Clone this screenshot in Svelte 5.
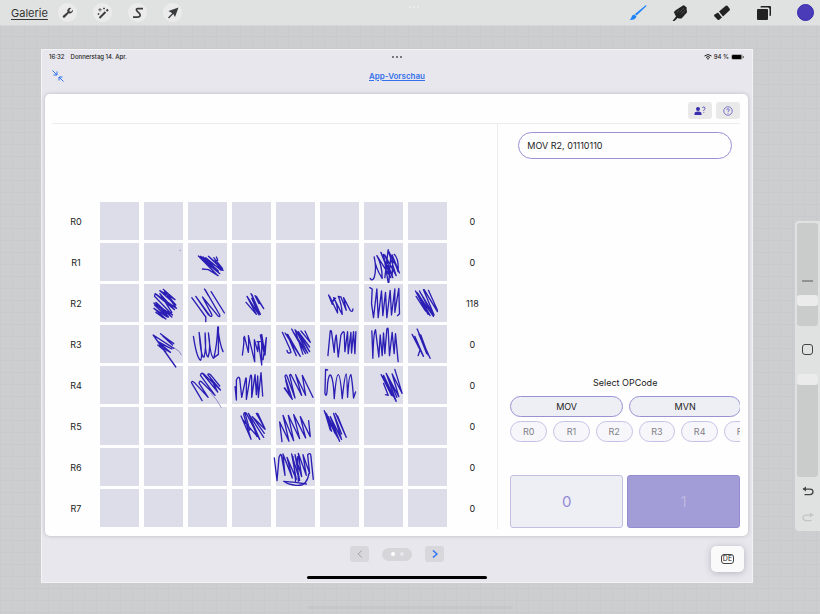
<script lang="ts">
  const bits = [0, 1, 2, 3, 4, 5, 6, 7];
  const rows = [
    { name: "R0", value: 0 },
    { name: "R1", value: 0 },
    { name: "R2", value: 118 },
    { name: "R3", value: 0 },
    { name: "R4", value: 0 },
    { name: "R5", value: 0 },
    { name: "R6", value: 0 },
    { name: "R7", value: 0 }
  ];
  const registers = ["R0", "R1", "R2", "R3", "R4", "R5"];

  let instruction = $state("MOV R2, 01110110");
  let brushSize = $state(22);
  let opacity = $state(100);

  // pen strokes over the bit grid, three units per pixel
  const strokes = [
    {
      x: 264, y: 108,
      paths: [
        "M176 63L232 120L186 72L240 116L182 64L250 106L206 64L248 100L222 68M188 102L206 104L235 122M230 66L234 76L226 78M190 66L236 108M198 68L244 106",
        "M70 163L106 194L60 167L108 210L74 170L110 220L46 176L104 224L60 176L96 232M46 176L44 184L98 240L42 204L96 246L48 202L86 246L44 210L82 246L42 220L78 252L48 232L70 248",
        "M194 162L206 182M196 164L240 240Q242 248 234 242L188 186L216 238Q218 248 210 242L168 184L206 240M156 188L198 246L198 260M214 170L254 234",
        "M334 176L346 202M319 202L350 238L322 184L358 240L336 190L362 238L336 178M350 184L372 221L352 190M346 182L358 206",
        "M62 296L102 326L68 302L98 330M102 340L40 300L108 396M52 318L96 342L58 324L92 352L54 330L78 350",
        "M161 304Q170 366 182 376Q190 370 178 292Q184 372 193 366Q200 340 196 294Q196 362 205 366Q214 340 206 294Q212 366 222 370Q232 330 234 276Q240 330 250 350M236 276L236 358L222 368",
        "M308 360Q314 320 312 308M314 304L326 352Q328 320 326 302L345 380L344 314L354 350L356 320L366 390L366 298L376 360L380 308L370 374M362 300L372 350M352 320L362 320"
      ]
    },
    {
      x: 684, y: 108,
      paths: [
        "M272 130Q278 140 284 128Q292 100 284 66Q288 100 308 130Q308 90 292 62L334 128L304 52L340 128L316 60L350 122L326 46L360 114L338 60L356 110Q358 70 344 58M326 44L316 128M334 60L328 142M312 58L326 142M340 70L338 122",
        "M147 180L158 208Q162 186 168 190M150 184L174 234Q174 206 162 188L188 238Q186 206 176 184L184 186L200 226L192 188L212 226Q219 234 220 222",
        "M271 158L278 162L276 206L282 248L292 162L296 248L306 168L310 242L318 172L322 248L332 166L336 240L346 162L346 232L358 160L360 236L354 242",
        "M408 168L446 238L416 176L452 242L412 172L462 244L420 168L464 240L432 164M474 230L434 164M447 166L474 226M410 184L438 228",
        "M8 292L32 344M16 294L62 364L24 298L50 362L22 298M36 282L78 356L40 290L84 354L50 288L90 350L56 290L90 336M64 288L92 322L76 288M22 346Q24 358 34 352L30 340M46 284L70 358",
        "M145 362L152 288Q155 284 156 292L164 352Q166 310 170 300L176 366L184 300Q192 284 194 294L196 350L204 290L206 356L214 292L216 354L222 290L226 356L229 290",
        "M277 288L280 370Q282 290 288 284L298 366L302 300L308 362L312 294L316 356L322 282Q326 276 326 284L330 362L338 292L344 356L348 296L356 380",
        "M398 298L432 364L406 304L426 350M413 282L452 370L418 296L442 356M424 300L446 360M416 362L422 344"
      ]
    },
    {
      x: 264, y: 483,
      paths: [
        "M187 122L155 68Q156 60 164 68L205 112L178 70Q178 60 186 66L226 106L182 46Q184 36 192 42L242 90L204 44Q206 38 214 46L240 78M188 40L234 96L210 50",
        "M286 80L290 120L290 60Q296 46 300 56L306 112L318 56Q320 50 320 62L320 118L332 48Q336 40 336 60L336 112L346 44L350 104L354 48L356 112L364 38L369 108",
        "M434 84L458 118L436 50Q438 40 442 48L466 114L450 46Q452 40 456 48L486 106L468 44L498 106L488 46L520 112M436 84L450 108L438 60",
        "M304 168L334 238L312 164Q314 154 320 160L360 238L326 160L372 232M350 160L376 206L354 160M310 180L350 226M376 208L338 170L374 220M316 160L330 210M332 172L352 230",
        "M427 245L420 186L448 244L430 166L462 242L446 166L480 236L462 164L498 234L482 170L512 230L507 182",
        "M404 294L412 362L418 292Q424 276 426 290L436 346L430 282L458 354L442 292L470 358L456 282L480 362L466 284L486 350L476 280L500 346L490 284L510 340L504 284Q514 276 514 290L521 358M460 290L468 364M474 290L476 364M508 340Q502 380 470 376Q444 374 432 364Q470 366 500 372"
      ]
    },
    {
      x: 774, y: 483,
      paths: [
        "M54 30L48 28L46 100Q52 120 54 70Q58 40 64 46Q72 60 74 116Q80 44 86 44Q92 44 98 116Q106 42 110 42Q112 42 114 112Q118 44 124 44Q128 60 132 114L138 96",
        "M215 44L246 106L222 46L260 124L230 40L268 110L248 42L278 100L256 28M228 104L236 106L222 70M220 50L250 108M236 50L262 112",
        "M44 152L66 214L50 160L76 220L56 170L90 244L62 170L96 238L72 160L96 222M78 160L110 232L84 168M46 156L62 210M52 172L84 232M60 182L80 226"
      ]
    }
  ];
</script>

<header class="toolbar">
  <a class="gallery" href="#gallery">Galerie</a>
  <button class="round" aria-label="Actions">
    <svg width="12" height="12" viewBox="0 0 24 24"><path fill="#3c3d3e" d="M22 6.500a6.200 6.200 0 0 1-8.600 5.800L5.500 20.800a2.300 2.300 0 0 1-3.400-3.200l8.800-7.500A6.200 6.200 0 0 1 18.500 2l-3.800 3.900.6 2.900 2.900.5L21.800 5.500z" /></svg>
  </button>
  <button class="round" aria-label="Adjustments">
    <svg width="12" height="12" viewBox="0 0 24 24" stroke="#3c3d3e" fill="none"><path stroke-width="4" d="M5 22L17 10M19 8L22 5" /><path stroke-width="1.500" d="M6 2v7M2.500 5.500h7M14 1v4M12 3h4M3 12v4M1 14h4" /></svg>
  </button>
  <button class="round" aria-label="Selection">
    <svg width="12" height="12" viewBox="0 0 24 24" fill="none" stroke="#3c3d3e" stroke-width="3.500"><path d="M22 3H12Q7 3 10 8l5 5q4 7-4 7H2" /></svg>
  </button>
  <button class="round" aria-label="Transform">
    <svg width="12" height="12" viewBox="0 0 24 24" fill="#3c3d3e"><path d="M23 1L16 20l-3.500-6L4 23l-2-2 8.500-8.500L3 8z" /></svg>
  </button>
  <span class="dots faint"><i></i><i></i><i></i></span>
  <div class="tools">
    <button aria-label="Paint">
      <svg width="18" height="18" viewBox="0 0 36 36" fill="#1c84f8"><path d="M34 2q2 0 0 3L15 23l-3-3zM11 21l4 4q-2 7-14 7 4-3 4-6 1-5 6-5z" /></svg>
    </button>
    <button aria-label="Smudge">
      <svg width="16" height="18" viewBox="0 0 32 36" fill="#222"><path d="M1 34l7-9-4-8q0-3 4-5L22 3q2-1 4 1l2 2q3 1 1 4l1 5q0 3-3 5l-7 8q-3 2-9 0l-6 6z" /><path stroke="#777" stroke-width="1" fill="none" d="M14 12l-4 5M24 8l-9 9M26 12l-8 9" /></svg>
    </button>
    <button aria-label="Erase">
      <svg width="18" height="16" viewBox="0 0 36 32" fill="#222"><path d="M12 13L25 2q3-2 5 1l3 4q2 2 0 4L20 23zM10 15l8 10-5 4q-2 2-4 0l-6-6q-2-2 0-4z" /></svg>
    </button>
    <button aria-label="Layers">
      <svg width="16" height="16" viewBox="0 0 32 32" fill="#222"><path d="M11 2h17q2 0 2 2v16q0 2-2 2h-1V8q0-3-3-3H9V4q0-2 2-2z" /><rect x="2" y="8" width="22" height="22" rx="2" /></svg>
    </button>
    <button class="swatch" aria-label="Colour"></button>
  </div>
</header>

<main class="canvas">
  <section class="screen">
    <div class="status">
      <div><span>16:32</span><span>Donnerstag 14. Apr.</span></div>
      <span class="dots"><i></i><i></i><i></i></span>
      <div class="power">
        <svg width="8" height="6" viewBox="0 0 16 12" fill="none" stroke="#222" stroke-width="2"><path d="M1 4q7-6 14 0M4 7q4-4 8 0" /><path d="M6.500 9q1.500-1 3 0L8 11z" fill="#222" stroke-width="1" /></svg>
        <span>94 %</span>
        <svg width="13" height="6" viewBox="0 0 26 12"><rect x="1" y="1" width="22" height="10" rx="3" fill="none" stroke="#777" /><rect x="2" y="2" width="19" height="8" rx="2" /><path d="M25 4v4" stroke="#777" stroke-width="2" /></svg>
      </div>
    </div>
    <div class="titlebar">
      <button aria-label="Exit full screen">
        <svg width="12" height="12" viewBox="0 0 24 24" fill="none" stroke="#2c6ff0" stroke-width="2"><path d="M1 1l9 9M10 3v7H3M23 23l-9-9M14 21v-7h7" /></svg>
      </button>
      <a href="#preview">App-Vorschau</a>
    </div>

    <div class="card">
      <div class="actions">
        <button aria-label="Who am I">
          <svg width="12" height="10" viewBox="0 0 24 20" fill="#3a2fae"><circle cx="8" cy="6" r="4" /><path d="M1 18v-3q0-4 7-4t7 4v3z" /><path fill="none" stroke="#3a2fae" stroke-width="1.500" d="M17 4q0-2 2.500-2T22 4.500 19.500 8v2M19.500 12v1.500" /></svg>
        </button>
        <button aria-label="Help">
          <svg width="10" height="10" viewBox="0 0 20 20" fill="none" stroke="#5a50bd" stroke-width="1.500"><circle cx="10" cy="10" r="8.500" /><path d="M7.500 8q0-2.500 2.500-2.500T12.500 8 10 11v1.500M10 14v1.500" /></svg>
        </button>
      </div>
      <div class="panes">
        <div class="memory">
          <div class="grid">
            <table>
              <tbody>
                {#each rows as row}
                  <tr>
                    <th scope="row">{row.name}</th>
                    {#each bits as bit (bit)}
                      <td class="bit"></td>
                    {/each}
                    <td class="value">{row.value}</td>
                  </tr>
                {/each}
              </tbody>
            </table>
            <svg class="ink" viewBox="0 0 1338 993" preserveAspectRatio="none" aria-hidden="true">
              {#each strokes as group}
                <g transform="translate({group.x} {group.y})">
                  {#each group.paths as d}
                    <path {d} />
                  {/each}
                </g>
              {/each}
              <path class="thin" d="M366 446Q386 456 389 468M478 583Q496 601 508 625M384 154l2 1" />
            </svg>
          </div>
        </div>

        <div class="editor">
          <input class="instruction" type="text" aria-label="Instruction" bind:value={instruction} />
          <div class="keys">
            <p>Select OPCode</p>
            <div class="opcodes">
              <button>MOV</button>
              <button>MVN</button>
            </div>
            <div class="registers">
              {#each registers as register}
                <button>{register}</button>
              {/each}
            </div>
            <div class="digits">
              <button>0</button>
              <button class="one">1</button>
            </div>
          </div>
        </div>
      </div>
    </div>

    <footer>
      <div class="pager">
        <button aria-label="Previous page">
          <svg width="6" height="8" viewBox="0 0 12 16" fill="none" stroke="#a4a4aa" stroke-width="2"><path d="M10 1L2 8l8 7" /></svg>
        </button>
        <span class="pages"><i class="on"></i><i></i></span>
        <button aria-label="Next page">
          <svg width="6" height="8" viewBox="0 0 12 16" fill="none" stroke="#2c74f4" stroke-width="3"><path d="M2 1l8 7-8 7" /></svg>
        </button>
      </div>
      <button class="lang"><span>DE</span></button>
    </footer>
    <div class="home"></div>
  </section>

  <aside>
    <input class="size" type="range" aria-label="Brush size" bind:value={brushSize} />
    <button class="modify" aria-label="Modify"></button>
    <input type="range" aria-label="Opacity" bind:value={opacity} />
    <button class="undo" aria-label="Undo">
      <svg width="12" height="10" viewBox="0 0 24 20"><path d="M3 6h13q6 0 6 5.500T16 17H5" fill="none" stroke="#444" stroke-width="2.500" /><path d="M1 6l7-5v10z" fill="#444" /></svg>
    </button>
    <button class="redo" aria-label="Redo">
      <svg width="12" height="10" viewBox="0 0 24 20"><path d="M21 6H8q-6 0-6 5.500T8 17h11" fill="none" stroke="#c2c4c5" stroke-width="2.500" /><path d="M23 6l-7-5v10z" fill="#c2c4c5" /></svg>
    </button>
  </aside>
</main>
<div class="handle"></div>

<style>
  :global(body) {
    margin: 0;
    background-color: #cccecf;
    background-image: linear-gradient(#c8cacc 1px, transparent 1px), linear-gradient(90deg, #c8cacc 1px, transparent 1px);
    background-size: 12px 12px;
    font-family: Inter, "Liberation Sans", sans-serif;
    color: #222;
  }

  button, input {
    box-sizing: border-box;
    margin: 0;
    padding: 0;
    border: none;
    background: none;
    font: inherit;
    color: inherit;
  }

  button {
    display: flex;
    align-items: center;
    justify-content: center;
  }

  .toolbar {
    display: flex;
    align-items: center;
    height: 26px;
    padding: 0 6px 0 11px;
    background: #e0e2e1;
    border-bottom: 1px solid #d6d8d8;
    box-sizing: border-box;
  }

  .gallery {
    width: 47px;
    font-size: 11px;
    line-height: 14px;
    color: #333;
    text-underline-offset: 2px;
  }

  .round {
    width: 19px;
    height: 19px;
    margin-right: 16px;
    border-radius: 50%;
    background: #ebebeb;
  }

  .tools {
    display: flex;
    align-items: center;
    gap: 25px;
    margin-left: auto;
  }

  .swatch {
    width: 17px;
    height: 17px;
    border-radius: 50%;
    background: #4a3cb8;
    border: 1px solid #3529b0;
  }

  .dots {
    display: flex;
    gap: 2px;
  }

  .dots i {
    width: 2px;
    height: 2px;
    border-radius: 1px;
    background: #555;
  }

  .dots.faint {
    align-self: flex-start;
    margin: 6px 0 0 auto;
  }

  .faint i {
    background: #ececec;
  }

  .canvas {
    display: flex;
    align-items: flex-start;
    gap: 42px;
    padding: 23px 0 0 41px;
  }

  .screen {
    flex: 1;
    min-width: 0;
    box-sizing: border-box;
    border: 1px solid #f3f3f5;
    background: #e8e7ed;
  }

  .status {
    display: grid;
    grid-template-columns: 1fr auto 1fr;
    align-items: center;
    height: 14px;
    padding: 0 8px 0 7px;
    font-size: 6px;
    font-weight: 500;
    line-height: 8px;
  }

  .status div {
    display: flex;
    align-items: center;
    gap: 6px;
  }

  .status .power {
    justify-content: flex-end;
    gap: 2px;
  }

  .titlebar {
    display: grid;
    grid-template-columns: 1fr auto 1fr;
    align-items: center;
    height: 24px;
    margin-bottom: 6px;
    padding: 0 10px;
  }

  .titlebar button {
    justify-self: start;
  }

  .titlebar a {
    font-size: 8px;
    font-weight: 600;
    line-height: 12px;
    color: #3470ea;
  }

  .card {
    margin: 0 4px 0 3px;
    padding: 0 8px 7px 7px;
    border-radius: 5px;
    background: #fefefe;
    box-shadow: 0 0 4px #b9b9c4;
  }

  .actions {
    display: flex;
    align-items: center;
    justify-content: flex-end;
    gap: 4px;
    height: 30px;
    padding-top: 4px;
    box-sizing: border-box;
    border-bottom: 1px solid #ececef;
  }

  .actions button {
    width: 24px;
    height: 17px;
    border-radius: 3px;
    background: #e9e9ea;
  }

  .panes {
    display: grid;
    grid-template-columns: minmax(0, 447fr) minmax(0, 242fr);
    min-height: 405px;
  }

  .memory {
    display: flex;
    align-items: flex-end;
    border-right: 1px solid #ececef;
  }

  .grid {
    position: relative;
    flex: 1;
    margin-bottom: -1px;
  }

  table {
    width: 100%;
    table-layout: fixed;
    border-spacing: 5px 3px;
    font-size: 9px;
  }

  th, td {
    height: 38px;
    padding: 0;
    text-align: center;
    font-weight: 400;
  }

  th {
    width: 38px;
  }

  .value {
    width: 40px;
  }

  .bit {
    background: #dddde9;
  }

  .ink {
    position: absolute;
    inset: 0;
    width: 100%;
    height: 100%;
    fill: none;
    stroke: #2a1eb4;
    stroke-width: 4;
    stroke-linecap: round;
    stroke-linejoin: round;
  }

  .thin {
    stroke: #6a62bb;
    stroke-width: 2;
  }

  .editor {
    display: flex;
    flex-direction: column;
    justify-content: space-between;
    padding: 8px 0 1px 12px;
  }

  .instruction {
    height: 27px;
    margin: 0 8px;
    padding: 0 8px;
    border: 1px solid #9891d2;
    border-radius: 14px;
    font-size: 9px;
  }

  .keys p {
    margin: 0 0 7px;
    font-size: 9px;
    line-height: 12px;
    text-align: center;
  }

  .opcodes, .registers {
    display: flex;
    gap: 6px;
    overflow: hidden;
    margin-bottom: 4px;
    font-size: 9px;
  }

  .opcodes button {
    flex: 0 0 49%;
    height: 21px;
    border: 1px solid #9891d2;
    border-radius: 11px;
    background: #eeeef5;
  }

  .registers button {
    flex: 0 0 16%;
    height: 21px;
    border: 1px solid #c6c2e6;
    border-radius: 11px;
    background: #f7f7fb;
    color: #808086;
  }

  .digits {
    display: flex;
    gap: 4px;
    margin-top: 33px;
    font-size: 15px;
  }

  .digits button {
    flex: 1;
    height: 53px;
    border: 1px solid #c3bfe3;
    border-radius: 3px;
    background: #eeeef5;
    color: #948dd5;
  }

  .digits .one {
    border-color: #938cd0;
    background: #a29dd7;
    color: #bbb7e0;
  }

  footer {
    display: grid;
    grid-template-columns: 1fr auto 1fr;
    align-items: start;
    padding: 10px 8px 0;
  }

  .pager {
    grid-column: 2;
    display: flex;
    align-items: center;
    gap: 13px;
  }

  .pager button {
    width: 19px;
    height: 16px;
    border-radius: 3px;
    background: #d7d7dc;
  }

  .pages {
    display: flex;
    align-items: center;
    justify-content: center;
    gap: 5px;
    width: 30px;
    height: 13px;
    border-radius: 7px;
    background: #d5d5da;
  }

  .pages i {
    width: 4px;
    height: 4px;
    border-radius: 50%;
    background: #e6e6ea;
  }

  .pages .on {
    background: #fff;
  }

  .lang {
    justify-self: end;
    width: 33px;
    height: 26px;
    border-radius: 5px;
    background: #fafafa;
    box-shadow: 0 1px 7px #b4b4c0;
    font-size: 7px;
    line-height: 8px;
  }

  .lang span {
    padding: 0 1px;
    border: 1px solid #444;
    border-radius: 3px;
  }

  .home {
    width: 180px;
    height: 3px;
    margin: 4px auto 3px;
    border-radius: 2px;
    background: #000;
  }

  aside {
    display: flex;
    flex-direction: column;
    align-items: center;
    box-sizing: border-box;
    width: 25px;
    margin-top: 172px;
    padding: 2px 1px 9px;
    border-radius: 4px 0 0 4px;
    background: #e0e2e2;
  }

  aside input {
    appearance: none;
    writing-mode: vertical-lr;
    direction: rtl;
    width: 21px;
    height: 103px;
    border-radius: 3px;
    background: #cacccc;
  }

  aside input::-webkit-slider-thumb {
    appearance: none;
    width: 21px;
    height: 11px;
    border-radius: 3px;
    background: #ebebeb;
  }

  .size {
    background: linear-gradient(#909293, #909293) 50% 57px / 11px 2px no-repeat #cacccc;
  }

  .modify {
    width: 11px;
    height: 11px;
    margin: 18px 0 19px;
    border: 1px solid #444;
    border-radius: 3px;
  }

  .undo, .redo {
    height: 10px;
    margin-top: 9px;
  }

  .redo {
    margin-top: 16px;
  }

  .handle {
    width: 206px;
    height: 3px;
    margin: 23px auto 0;
    border-radius: 2px;
    background: #c5c7c8;
  }
</style>
